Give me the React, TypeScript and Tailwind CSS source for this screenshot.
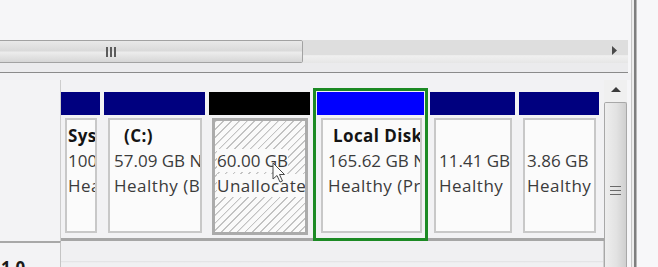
const font = "font-['Segoe_UI','Open_Sans',sans-serif]"

type Part = {
  w: number
  ml: number
  header: string
  title?: string
  titleIndent?: number
  size: string
  status: string
  pl: number
}

const parts: Part[] = [
  { w: 39, ml: 0, header: 'bg-[#00007f]', title: 'System Reserved', size: '100 MB NTFS', status: 'Healthy (System, Active, Primary Partition)', pl: 1 },
  { w: 101, ml: 4, header: 'bg-[#00007f]', title: '(C:)', titleIndent: 10, size: '57.09 GB NTFS', status: 'Healthy (Boot, Page File, Crash Dump, Primary Partition)', pl: 4 },
]

const rightParts: Part[] = [
  { w: 85, ml: 2, header: 'bg-[#00007f]', size: '11.41 GB', status: 'Healthy', pl: 3 },
  { w: 80, ml: 4, header: 'bg-[#00007f]', size: '3.86 GB', status: 'Healthy', pl: 2 },
]

function PartitionText({ p }: { p: Part }) {
  return (
    <div className="overflow-hidden whitespace-nowrap pt-[3px] text-[17px] leading-[25px] text-[#3b3b3b]" style={{ paddingLeft: p.pl }}>
      <div className="h-[25px] font-bold tracking-[0.4px] text-[#141414]" style={{ paddingLeft: p.titleIndent ?? 0 }}>
        {p.title ?? ''}
      </div>
      <div>{p.size}</div>
      <div className="tracking-[0.5px]">{p.status}</div>
    </div>
  )
}

function Partition({ p }: { p: Part }) {
  return (
    <div className="mt-[12px] flex h-[146px] shrink-0 flex-col" style={{ width: p.w, marginLeft: p.ml }}>
      <div className={`h-[23px] ${p.header}`} />
      <div className="mt-[3px] ml-[4px] mr-[3px] h-[115px] border-2 border-[#c8c8c8] bg-[#fbfbfb]">
        <PartitionText p={p} />
      </div>
    </div>
  )
}

function HScroll() {
  return (
    <div className="flex h-[23px] w-[628px] shrink-0">
      <div className="flex w-[303px] items-center rounded-r-[2px] border-y border-r border-[#a2a2a2] bg-[linear-gradient(#e9e9e9,#dadada_45%,#ececec_55%,#d6d6d6)] pl-[106px]">
        <div className="flex h-[10px] gap-[2px]">
          <div className="w-[2px] bg-[#5c5c5c]" />
          <div className="w-[2px] bg-[#5c5c5c]" />
          <div className="w-[2px] bg-[#5c5c5c]" />
        </div>
      </div>
      <div className="flex flex-1 items-center justify-end bg-[linear-gradient(#dedede,#dedede_65%,#f0f0f0_68%,#e6e6e6)] pr-[11px] pb-[3px]">
        <svg width="5" height="9" viewBox="0 0 5 9">
          <path d="M0 0 L5 4.5 L0 9 Z" fill="#4a4a4a" />
        </svg>
      </div>
    </div>
  )
}

function VScroll() {
  return (
    <div className="flex w-[23px] flex-col">
      <div className="flex h-[22px] shrink-0 items-start justify-center bg-[#f0f0f0] pt-[7px]">
        <svg width="10" height="5" viewBox="0 0 10 5">
          <path d="M0 5 L5 0 L10 5 Z" fill="#3c3c3c" />
        </svg>
      </div>
      <div className="flex flex-1 flex-col items-center rounded-t-[2px] border-x border-t border-[#a8a8a8] bg-[linear-gradient(90deg,#eeeeee,#e2e2e2_55%,#cfcfcf)] pt-[83px]">
        <div className="flex flex-col gap-[3px]">
          <div className="h-px w-[11px] bg-[#6a6a6a]" />
          <div className="h-px w-[11px] bg-[#6a6a6a]" />
          <div className="h-px w-[11px] bg-[#6a6a6a]" />
        </div>
      </div>
    </div>
  )
}

export default function App() {
  return (
    <div className={`relative flex h-[267px] w-[658px] overflow-hidden bg-[#f6f6f8] ${font}`}>
      <div className="flex h-[267px] w-[631px] shrink-0 flex-col">
        <div className="h-[40px] shrink-0" />
        <HScroll />
        <div className="h-[9px] w-[628px] shrink-0 bg-[#ebebed]" />
        <div className="h-[1px] w-[628px] shrink-0 bg-[#8a8a8a]" />
        <div className="h-[7px] shrink-0 bg-[#f1f1f3]" />

        <div className="flex min-h-0 flex-1 overflow-hidden">
          <div className="flex w-[604px] flex-col">
            {/* Disk 0 row */}
            <div className="flex h-[161px] shrink-0">
              <div className="w-[61px] shrink-0 border-r border-[#cdcdcd] bg-[#f3f3f5]" />
              <div className="flex flex-1 items-start border-b-[3px] border-[#a6a6a6] bg-[#f2f2f4]">
                {parts.map((p) => (
                  <Partition key={p.size} p={p} />
                ))}

                {/* unallocated */}
                <div className="mt-[12px] ml-[4px] flex h-[146px] w-[101px] shrink-0 flex-col">
                  <div className="h-[23px] bg-black" />
                  <div className="mt-[3px] ml-[3px] mr-[2px] h-[117px] border-[3px] border-[#ababab] bg-[repeating-linear-gradient(135deg,#c2c2c2_0px,#c2c2c2_1px,#fafafa_1.5px,#fafafa_5.5px)]">
                    <div className="overflow-hidden whitespace-nowrap pt-[2px] pl-[2px] text-[17px] leading-[25px] text-[#3b3b3b]">
                      <div className="h-[25px]" />
                      <div><span className="bg-[#fafafa]">60.00 GB</span></div>
                      <div className="tracking-[0.5px]"><span className="bg-[#fafafa]">Unallocated</span></div>
                    </div>
                  </div>
                </div>

                {/* selected partition */}
                <div className="mt-[8px] ml-[3px] flex h-[153px] w-[115px] shrink-0 flex-col border-[3px] border-[#1c8a24] p-[1px]">
                  <div className="h-[23px] bg-[#0000ff]" />
                  <div className="mt-[3px] ml-[4px] mr-[2px] h-[115px] border-2 border-[#c8c8c8] bg-[#fbfbfb]">
                    <PartitionText
                      p={{ w: 107, ml: 0, header: '', title: 'Local Disk (D:)', titleIndent: 5, size: '165.62 GB NTFS', status: 'Healthy (Primary Partition)', pl: 5 }}
                    />
                  </div>
                </div>

                {rightParts.map((p) => (
                  <Partition key={p.size} p={p} />
                ))}
              </div>
            </div>

            {/* Disk 1 row, scrolled off */}
            <div className="flex min-h-0 flex-1">
              <div className="w-[61px] shrink-0 overflow-hidden border-t-2 border-r border-[#a8a8a8] border-r-[#c4c4c4] bg-[#f3f3f5] pt-[13px] pl-[1px] text-[17px] leading-[24px] font-bold text-[#1a1a1a]">
                1.0
              </div>
              <div className="flex-1 border-r border-[#d0d0d0] bg-[linear-gradient(#f0f0f2,#f0f0f2_75%,#e2e2e4_78%,#f0f0f2_84%)]" />
            </div>
          </div>
          <VScroll />
        </div>
      </div>

      <div className="w-px bg-[#c6c6c6]" />
      <div className="w-[2px] bg-[#ededed]" />
      <div className="w-[2px] bg-[#7e7e7e]" />
      <div className="w-px bg-[#b8b8b8]" />
      <div className="flex-1 bg-[#f7f7f9]" />

      {/* mouse pointer */}
      <svg className="absolute left-[272px] top-[162px]" width="14" height="22" viewBox="0 0 14 22">
        <path d="M1 1 L1 17 L5 13.5 L8 20 L10.5 19 L7.5 12.5 L12.5 12.5 Z" fill="#fdfdfd" stroke="#4a4a4a" strokeWidth="1" strokeLinejoin="round" />
      </svg>
    </div>
  )
}
